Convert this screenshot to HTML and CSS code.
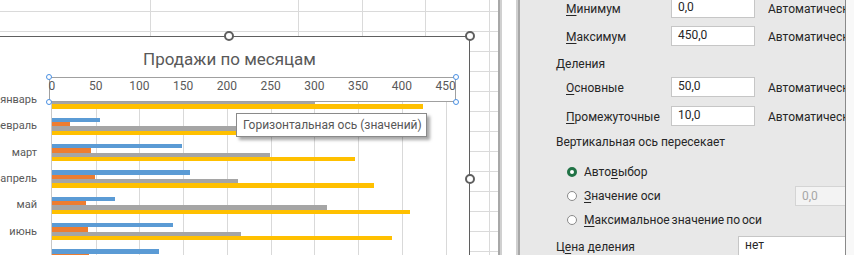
FILE: index.html
```html
<!DOCTYPE html>
<html lang="ru">
<head>
<meta charset="utf-8">
<title>Формат оси</title>
<link rel="stylesheet" href="styles.css">
</head>
<body>
<div class="app">
  <div class="sheet">
    <div class="chart">
      <div class="title">Продажи по месяцам</div>
      <div class="plotbody">
        <div class="cats">
          <div class="cat">январь</div>
          <div class="cat">февраль</div>
          <div class="cat">март</div>
          <div class="cat">апрель</div>
          <div class="cat">май</div>
          <div class="cat">июнь</div>
          <div class="cat">июль</div>
        </div>
        <div class="plot">
          <div class="grp"><i class="bar s1" style="--v:100"></i><i class="bar s2" style="--v:30"></i><i class="bar s3" style="--v:300"></i><i class="bar s4" style="--v:424"></i></div>
          <div class="grp"><i class="bar s1" style="--v:55"></i><i class="bar s2" style="--v:20"></i><i class="bar s3" style="--v:280"></i><i class="bar s4" style="--v:214"></i></div>
          <div class="grp"><i class="bar s1" style="--v:148"></i><i class="bar s2" style="--v:44"></i><i class="bar s3" style="--v:249"></i><i class="bar s4" style="--v:346"></i></div>
          <div class="grp"><i class="bar s1" style="--v:158"></i><i class="bar s2" style="--v:49"></i><i class="bar s3" style="--v:213"></i><i class="bar s4" style="--v:368"></i></div>
          <div class="grp"><i class="bar s1" style="--v:72"></i><i class="bar s2" style="--v:39"></i><i class="bar s3" style="--v:314"></i><i class="bar s4" style="--v:409"></i></div>
          <div class="grp"><i class="bar s1" style="--v:138"></i><i class="bar s2" style="--v:41"></i><i class="bar s3" style="--v:216"></i><i class="bar s4" style="--v:389"></i></div>
          <div class="grp"><i class="bar s1" style="--v:122"></i><i class="bar s2" style="--v:42"></i><i class="bar s3" style="--v:260"></i><i class="bar s4" style="--v:380"></i></div>
        </div>
      </div>
      <div class="axis">
        <div class="ticks">
          <span>0</span><span>50</span><span>100</span><span>150</span><span>200</span><span>250</span><span>300</span><span>350</span><span>400</span><span>450</span>
        </div>
        <span class="sel sel-tl"></span><span class="sel sel-bl"></span><span class="sel sel-tr"></span><span class="sel sel-br"></span>
      </div>
      <div class="tooltip">Горизонтальная ось (значений)</div>
      <span class="handle h-top"></span>
      <span class="handle h-tr"></span>
      <span class="handle h-right"></span>
    </div>
  </div>
  <div class="split"></div>
  <div class="pane">
    <div class="row r-min"><span class="lbl"><u>М</u>инимум</span><span class="field">0,0</span><span class="auto">Автоматическ</span></div>
    <div class="row r-max"><span class="lbl"><u>М</u>аксимум</span><span class="field">450,0</span><span class="auto">Автоматическ</span></div>
    <div class="head h-div">Деления</div>
    <div class="row r-maj"><span class="lbl"><u>О</u>сновные</span><span class="field">50,0</span><span class="auto">Автоматическ</span></div>
    <div class="row r-minr"><span class="lbl"><u>П</u>ромежуточные</span><span class="field">10,0</span><span class="auto">Автоматическ</span></div>
    <div class="head h-cross">Вертикальная ось пересекает</div>
    <div class="radios">
      <div class="radio on"><span class="dot"></span><span>Авто<u>в</u>ыбор</span></div>
      <div class="radio"><span class="dot"></span><span class="rtext"><u>З</u>начение оси</span><span class="field off">0,0</span></div>
      <div class="radio"><span class="dot"></span><span class="tight"><u>М</u>аксимальное значение по оси</span></div>
    </div>
    <div class="row r-price"><span class="plbl">Ц<u>е</u>на деления</span><span class="field wide">нет</span></div>
  </div>
  <div class="edge"></div>
</div>
</body>
</html>
```
FILE: styles.css
```css
* { box-sizing: border-box; }
html, body { margin: 0; padding: 0; }
body {
  width: 854px;
  height: 255px;
  overflow: hidden;
  background: #fff;
  font-family: Roboto, "Noto Sans", sans-serif;
}
.app { display: flex; width: 854px; height: 255px; }

/* spreadsheet */
.sheet {
  width: 498px;
  height: 255px;
  overflow: hidden;
  background-color: #fff;
  background-image:
    linear-gradient(to bottom, #dadada 1px, transparent 1px),
    linear-gradient(to right,
      transparent 150px, #dadada 150px, #dadada 151px, transparent 151px,
      transparent 298px, #dadada 298px, #dadada 299px, transparent 299px,
      transparent 362px, #dadada 362px, #dadada 363px, transparent 363px,
      transparent 425px, #dadada 425px, #dadada 426px, transparent 426px,
      transparent 489px, #dadada 489px, #dadada 490px, transparent 490px);
  background-size: 100% 20px, 100% 100%;
  background-position: 0 11px, 0 0;
  background-repeat: repeat-y, no-repeat;
}
.chart {
  position: relative;
  margin: 36px 0 0 -11px;
  width: 481px;
  height: 287px;
  border: 1px solid #5f5f5f;
  background: #fff;
  color: #595959;
}
.title {
  height: 50px;
  padding-top: 11px;
  text-align: center;
  font-size: 17px;
  line-height: 22px;
}
.plotbody { display: flex; }
.cats {
  width: 62px;
  border-right: 1px solid #c8c8c8;
}
.cat {
  height: 26.33px;
  line-height: 26.33px;
  text-align: right;
  padding-right: 14px;
  font-size: 11px;
  white-space: nowrap;
}
.plot {
  width: 395px;
  background: repeating-linear-gradient(to right, transparent 0 42.75px, #d9d9d9 42.75px 43.75px) 1px 0 / 100% 100% no-repeat;
}
.grp {
  height: 26.33px;
  padding-top: 4.4px;
}
.bar {
  display: block;
  height: 4.33px;
  width: calc(var(--v) * 0.875px);
}
.s1 { background: #5b9bd5; }
.s2 { background: #ed7d31; }
.s3 { background: #a5a5a5; }
.s4 { background: #ffc000; }

/* selected value axis (overlay) */
.axis {
  position: absolute;
  left: 59px;
  top: 40px;
  width: 407px;
  height: 25px;
  border: 1px solid #a0a0a0;
  background: #fff;
}
.ticks {
  display: flex;
  margin-left: -19.9px;
  font-size: 12px;
  line-height: 16px;
}
.ticks span {
  flex: 0 0 43.75px;
  text-align: center;
}
.sel {
  position: absolute;
  width: 6px;
  height: 6px;
  border: 1px solid #4a90e2;
  border-radius: 50%;
  background: #fff;
}
.sel-tl { left: -4px; top: -4px; }
.sel-bl { left: -4px; bottom: -4px; }
.sel-tr { right: -4px; top: -4px; }
.sel-br { right: -4px; bottom: -4px; }

.tooltip {
  position: absolute;
  left: 246px;
  top: 76px;
  width: 191px;
  height: 24px;
  border: 1px solid #8a8a8a;
  background: #fff;
  box-shadow: 3px 3px 3px rgba(0,0,0,0.35);
  padding-left: 6px;
  font-size: 12px;
  line-height: 22px;
  color: #575757;
  white-space: nowrap;
}
.handle {
  position: absolute;
  width: 10px;
  height: 10px;
  border: 2px solid #5f5f5f;
  border-radius: 50%;
  background: #fff;
}
.h-top { left: 234px; top: -6px; }
.h-tr { right: -6px; top: -6px; }
.h-right { right: -6px; top: 137px; }

/* splitter */
.split {
  width: 22px;
  height: 255px;
  background: #fff;
  border-left: 2px solid #a8a8a8;
  border-right: 2px solid #a8a8a8;
  box-shadow: inset 2px 0 0 #d0d0d0, inset -2px 0 0 #d0d0d0;
}

/* format pane */
.pane {
  width: 326px;
  height: 255px;
  overflow: hidden;
  background: #e8e8e8;
  border-right: 1px solid #8a8a8a;
  padding-left: 46px;
  color: #262626;
  font-size: 12px;
  white-space: nowrap;
}
u { text-decoration-thickness: 1px; text-underline-offset: 2px; }
.row {
  display: flex;
  align-items: flex-start;
  height: 20px;
}
.lbl {
  width: 105px;
  flex: none;
  padding-top: 3px;
  line-height: 16px;
}
.field {
  flex: none;
  width: 84px;
  height: 20px;
  border: 1px solid #c6c6c6;
  background: #fff;
  padding: 0 6px;
  line-height: 16px;
}
.auto {
  flex: none;
  margin-left: 13px;
  padding-top: 3px;
  line-height: 16px;
}
.r-min { margin-top: -2px; }
.r-max { margin-top: 8px; }
.head {
  margin-left: -10px;
  height: 20px;
  line-height: 20px;
}
.h-div { margin-top: 8px; }
.r-maj { margin-top: 3px; }
.r-minr { margin-top: 9px; }
.h-cross { margin-top: 6px; }
.radios { margin-top: 8px; }
.radio {
  display: flex;
  align-items: center;
  height: 24px;
}
.dot {
  flex: none;
  width: 10px;
  height: 10px;
  border: 1px solid #8a8a8a;
  border-radius: 50%;
  background: #fff;
  margin: 0 7px 0 1px;
}
.radio.on .dot {
  border: 3px solid #217346;
}
.rtext { width: 211px; flex: none; }
.tight { word-spacing: -1px; }
.field.off {
  width: 60px;
  background: #f3f3f3;
  border-color: #d4d4d4;
  color: #a6a6a6;
  padding-top: 1px;
}
.r-price { margin-top: 4px; margin-left: -10px; }
.plbl { width: 182px; flex: none; padding-top: 3px; line-height: 16px; }
.field.wide { width: 120px; border-right: none; }
.edge {
  width: 8px;
  height: 255px;
  background: #f8f8f8;
}
```
